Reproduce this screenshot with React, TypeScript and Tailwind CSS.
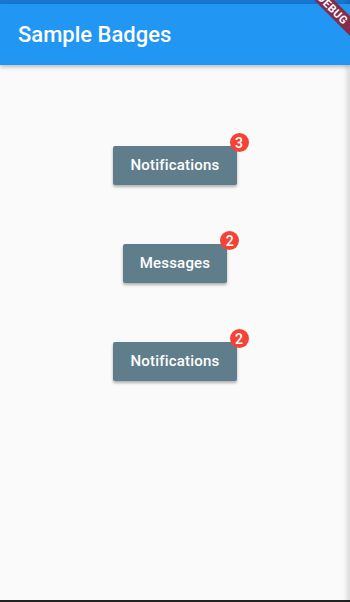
const badgeButtons = [
  { label: 'Notifications', count: 3 },
  { label: 'Messages', count: 2 },
  { label: 'Notifications', count: 2 },
]

const BadgeButton = ({ label, count }: { label: string; count: number }) => (
  <div className="relative">
    <button className="h-[39px] rounded-[2px] bg-[#607D8B] px-[17px] text-[15px] font-medium tracking-[0.2px] text-white shadow-[0_2px_3px_rgba(0,0,0,0.3)]">
      {label}
    </button>
    <span className="absolute -right-[12px] -top-[13px] flex h-[19px] w-[19px] items-center justify-center rounded-full bg-[#F44336] text-[14px] font-medium leading-none text-white">
      {count}
    </span>
  </div>
)

export default function App() {
  return (
    <div className="relative flex h-[602px] w-[350px] flex-col overflow-hidden bg-[#FAFAFA] font-['Roboto',sans-serif]">
      <div className="h-[4px] bg-[#1976D2]" />
      <header className="z-10 flex h-[61px] items-center bg-[#2196F3] pl-[18px] shadow-[0_2px_4px_rgba(0,0,0,0.25)]">
        <h1 className="text-[22px] font-medium text-white">Sample Badges</h1>
      </header>

      <main className="flex flex-1 flex-col items-center gap-[59px] pt-[81px]">
        {badgeButtons.map((b, idx) => (
          <BadgeButton key={idx} label={b.label} count={b.count} />
        ))}
      </main>

      <div className="h-[2px] bg-[#222]" />

      {/* edge shadow */}
      <div className="pointer-events-none absolute right-0 top-0 h-full w-[7px] bg-gradient-to-r from-transparent to-[rgba(0,0,0,0.12)]" />

      {/* debug banner */}
      <div className="pointer-events-none absolute right-0 top-0 z-20 h-[80px] w-[80px] overflow-hidden">
        <div className="absolute left-[3px] top-[2px] flex h-[14px] w-[120px] rotate-45 items-center justify-center bg-[#842c4c] text-[11px] font-bold leading-none tracking-[0.5px] text-white">
          DEBUG
        </div>
      </div>
    </div>
  )
}
